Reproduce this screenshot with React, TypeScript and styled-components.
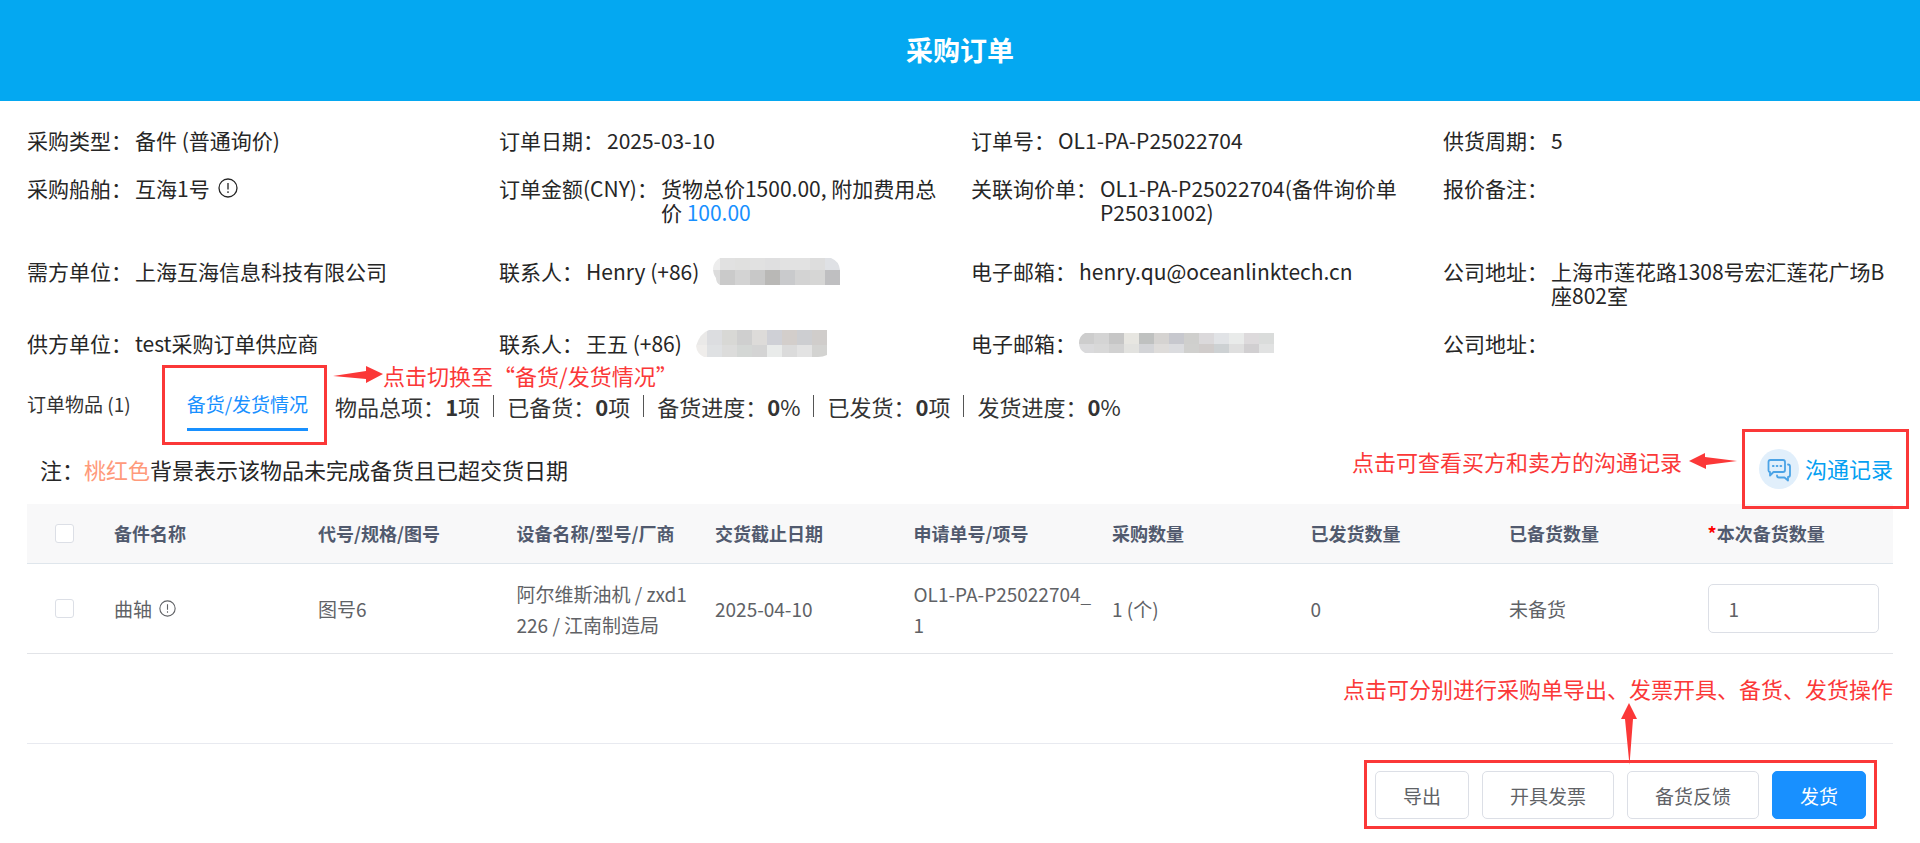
import React from 'react';
import styled, { createGlobalStyle } from 'styled-components';

const red = '#fb3838';

const GlobalStyle = createGlobalStyle`
  *, *::before, *::after { box-sizing: border-box; }
  body {
    margin: 0;
    background: #fff;
    color: #262626;
    font-family: 'Noto Sans CJK SC', 'Noto Sans', sans-serif;
    font-size: 22px;
    line-height: 24px;
  }
  button, input { font-family: inherit; }
`;

const Header = styled.header`
  display: flex;
  align-items: center;
  justify-content: center;
  height: 101px;
  padding-bottom: 2px;
  background: #04a8f1;
`;

const Title = styled.h1`
  margin: 0;
  color: #fff;
  font-size: 27px;
  line-height: 40px;
`;

const Main = styled.main`
  padding: 27px 27px 14px;
`;

const InfoGrid = styled.dl<{ $gap: number }>`
  display: grid;
  grid-template-columns: repeat(4, 1fr);
  row-gap: 24px;
  margin: 0 -22px ${p => p.$gap}px 0;
  font-size: 21px;
`;

const InfoItem = styled.div`
  display: flex;
  align-items: flex-start;
  padding-right: 22px;
`;

const Term = styled.dt`
  flex: none;
  padding-right: 3px;
`;

const Detail = styled.dd`
  display: flex;
  align-items: center;
  gap: 8px;
  min-height: 24px;
  margin: 0;
`;

const Amount = styled.a`
  color: #1890ff;
  text-decoration: none;
`;

const Masked = styled.svg<{ $spaced?: boolean }>`
  display: block;
  flex: none;
  margin: -2px 0 -2px ${p => (p.$spaced ? 6 : 0)}px;
`;

const Tabs = styled.div`
  display: flex;
  align-items: flex-start;
  height: 80px;
`;

const Tab = styled.button<{ $active?: boolean }>`
  height: 51px;
  padding: 0;
  border: 0;
  border-bottom: 3px solid ${p => (p.$active ? '#1890ff' : 'transparent')};
  background: none;
  color: ${p => (p.$active ? '#1890ff' : '#333')};
  font-size: 19px;
  line-height: 24px;
  white-space: nowrap;
`;

const TabSlot = styled.div`
  padding-top: 15px;
`;

const Marked = styled.div`
  border: 3px solid ${red};
`;

const MarkedTab = styled(Marked)`
  height: 80px;
  margin-left: 31px;
  padding: 12px 16px 0 22px;
`;

const TabSide = styled.div`
  margin-top: -2px;
  padding-left: 6px;
`;

const Hint = styled.p`
  display: flex;
  align-items: center;
  margin: 0;
  color: ${red};
  line-height: 24px;
`;

const Stats = styled.ul`
  display: flex;
  margin: 7px 0 0 2px;
  padding: 0;
  list-style: none;
  color: #333;
`;

const Stat = styled.li`
  display: flex;
  align-items: center;

  & + &::before {
    content: '';
    width: 1px;
    height: 22px;
    margin: 0 13px;
    background: #555;
  }
`;

const NoteBar = styled.div`
  display: flex;
  justify-content: space-between;
  height: 59px;
  padding-left: 13px;
`;

const Note = styled.p`
  margin: 0;
  padding-top: 12px;
`;

const Peach = styled.span`
  color: #ff9a7b;
`;

const Contact = styled.div`
  position: relative;
  display: flex;
  align-items: flex-start;
  gap: 5px;
  margin: -16px -16px 0 0;
`;

const ContactHint = styled(Hint)`
  gap: 7px;
  margin-top: 20px;
`;

const MarkedLink = styled(Marked)`
  height: 80px;
  padding: 17px 13px 0 14px;
`;

const RecordLink = styled.a`
  display: flex;
  align-items: center;
  gap: 5px;
  color: #04a0f2;
  text-decoration: none;
`;

const RecordLabel = styled.span`
  padding-bottom: 4px;
`;

const Table = styled.table`
  width: 100%;
  border-collapse: separate;
  border-spacing: 0;
  table-layout: fixed;
  color: #606266;
  font-size: 19px;
  line-height: 31px;
`;

const Col = styled.col<{ $w?: number }>`
  ${p => (p.$w ? `width: ${p.$w}px;` : '')}
`;

const Th = styled.th`
  height: 60px;
  padding: 0 6px 0 13px;
  border-bottom: 1px solid #dfe6ec;
  background: #f8f8f9;
  color: #515a6e;
  font-size: 18px;
  text-align: left;
  white-space: nowrap;
`;

const Td = styled.td`
  height: 90px;
  padding: 0 6px 0 13px;
  border-bottom: 1px solid #e2e4e8;
  word-break: break-all;
`;

const CellLine = styled.span`
  display: flex;
  align-items: center;
  gap: 7px;
`;

const Star = styled.span`
  color: #f00;
`;

const Check = styled.input`
  display: block;
  appearance: none;
  width: 19px;
  height: 19px;
  margin: 0 0 0 15px;
  border: 1px solid #dcdfe6;
  border-radius: 3px;
  background: #fff;
`;

const Quantity = styled.input`
  display: block;
  width: calc(100% - 8px);
  height: 49px;
  padding: 0 20px;
  border: 1px solid #dcdfe6;
  border-radius: 5px;
  color: #606266;
  font-size: 19px;
`;

const HintRow = styled.div`
  display: flex;
  align-items: flex-start;
  justify-content: flex-end;
  height: 90px;
  padding-top: 22px;
  border-bottom: 1px solid #e8eaf0;
`;

const Footer = styled.footer`
  display: flex;
  justify-content: flex-end;
  padding: 16px 16px 0 0;
`;

const Actions = styled(Marked)`
  position: relative;
  display: flex;
  gap: 13px;
  padding: 8px 8px 7px;
`;

const UpArrow = styled.svg`
  position: absolute;
  left: 50%;
  bottom: 100%;
  margin: 0 0 -2px 1px;
`;

const Button = styled.button<{ $primary?: boolean }>`
  height: 48px;
  padding: 0 27px;
  border: 1px solid ${p => (p.$primary ? '#1890ff' : '#dcdfe6')};
  border-radius: 5px;
  background: ${p => (p.$primary ? '#1890ff' : '#fff')};
  color: ${p => (p.$primary ? '#fff' : '#606266')};
  font-size: 19px;
`;

const InfoIcon = ({ size }: { size: number }) => (
  <svg width={size} height={size} viewBox="0 0 20 20" fill="none" stroke="currentColor" strokeWidth="1.3">
    <circle cx="10" cy="10" r="9" />
    <path d="M10 5v6.5M10 13.3v1.7" />
  </svg>
);

type MosaicProps = {
  id: string;
  rows: string[][];
  first: number;
  heights: [number, number];
  outline: string;
  spaced?: boolean;
};

const CELL = 15;

const Mosaic = ({ id, rows, first, heights, outline, spaced }: MosaicProps) => {
  const width = first + (rows[0].length - 1) * CELL;
  const height = heights[0] + heights[1];
  return (
    <Masked $spaced={spaced} width={width} height={height} viewBox={`0 0 ${width} ${height}`} shapeRendering="crispEdges" role="img" aria-label="***">
      <clipPath id={id}>
        <path d={outline} />
      </clipPath>
      <g clipPath={`url(#${id})`}>
        {rows.map((row, y) =>
          row.map((color, x) => (
            <rect
              key={`${x}-${y}`}
              x={x === 0 ? 0 : first + (x - 1) * CELL}
              y={y * heights[0]}
              width={x === 0 ? first : CELL}
              height={heights[y]}
              fill={color}
            />
          ))
        )}
      </g>
    </Masked>
  );
};

const buyerPhone = [
  ['#ededed', '#e1e1e1', '#e0e0df', '#e1e1e1', '#dfdfe0', '#e2e2e2', '#e2e2e2', '#dddddd', '#dfe1e5'],
  ['#dcdcdc', '#cacaca', '#d3d3d3', '#c8c8c8', '#b9b8b6', '#c9cacc', '#d3d3d3', '#d6d6d5', '#bfbfc1'],
];
const sellerPhone = [
  ['#eae9e8', '#dcdde0', '#d8d8d5', '#cfcfcf', '#dddbd9', '#cfd0d6', '#d3cecb', '#cdced1', '#d0cdcb'],
  ['#efedeb', '#dfe1e3', '#dcdcdb', '#d4d7d5', '#d4d4d4', '#e9ebea', '#dbdbdb', '#e3e3e3', '#d3d3d1'],
];
const sellerMail = [
  ['#cdcdcd', '#d4d4d4', '#c6c6c6', '#e7e6e1', '#bfc1c0', '#d5d3d1', '#c7c8ce', '#cfcfcd', '#dbd9db', '#e1e3e6', '#e9ebea', '#dddadc', '#dadcdb'],
  ['#dadadc', '#d8d8d8', '#d1d1d1', '#e2e2df', '#d3d4d7', '#dedcda', '#dbdcdf', '#d0d0ce', '#d0cccb', '#cdd1d3', '#dfdfdf', '#d1cfd1', '#e1e2e2'],
];

const Item = ({ label, children }: { label: string; children?: React.ReactNode }) => (
  <InfoItem>
    <Term>{label}：</Term>
    <Detail>{children}</Detail>
  </InfoItem>
);

export default function App() {
  return (
    <>
      <GlobalStyle />
      <Header>
        <Title>采购订单</Title>
      </Header>
      <Main>
        <InfoGrid $gap={35}>
          <Item label="采购类型">备件 (普通询价)</Item>
          <Item label="订单日期">2025-03-10</Item>
          <Item label="订单号">OL1-PA-P25022704</Item>
          <Item label="供货周期">5</Item>
          <Item label="采购船舶">互海1号<InfoIcon size={20} /></Item>
          <Item label="订单金额(CNY)">
            <span>货物总价1500.00, 附加费用总价 <Amount href="#fees">100.00</Amount></span>
          </Item>
          <Item label="关联询价单">OL1-PA-P25022704(备件询价单P25031002)</Item>
          <Item label="报价备注" />
        </InfoGrid>
        <InfoGrid $gap={24}>
          <Item label="需方单位">上海互海信息科技有限公司</Item>
          <Item label="联系人">
            Henry (+86)
            <Mosaic
              id="buyer-phone"
              rows={buyerPhone}
              first={7}
              heights={[12, 15]}
              outline="M7 0H118Q126 3 127 12V27H7Q3 25 3 20Q0 16 0 10Q1 3 7 0Z"
              spaced
            />
          </Item>
          <Item label="电子邮箱">henry.qu@oceanlinktech.cn</Item>
          <Item label="公司地址">上海市莲花路1308号宏汇莲花广场B座802室</Item>
        </InfoGrid>
        <InfoGrid $gap={10}>
          <Item label="供方单位">test采购订单供应商</Item>
          <Item label="联系人">
            王五 (+86)
            <Mosaic
              id="seller-phone"
              rows={sellerPhone}
              first={11}
              heights={[15, 12]}
              outline="M13 0H131V25Q127 27 122 27H8Q1 24 0 16Q4 3 13 0Z"
              spaced
            />
          </Item>
          <Item label="电子邮箱">
            <Mosaic
              id="seller-mail"
              rows={sellerMail}
              first={15}
              heights={[11, 9]}
              outline="M6 0H195V20H6Q0 17 0 10Q0 3 6 0Z"
            />
          </Item>
          <Item label="公司地址" />
        </InfoGrid>

        <Tabs>
          <TabSlot>
            <Tab>订单物品 (1)</Tab>
          </TabSlot>
          <MarkedTab>
            <Tab $active>备货/发货情况</Tab>
          </MarkedTab>
          <TabSide>
            <Hint>
              <svg width="50" height="18" viewBox="0 0 50 18" fill={red}>
                <path d="M0 10L33 5V0L50 8L33 17V13Z" />
              </svg>
              点击切换至“备货/发货情况”
            </Hint>
            <Stats>
              <Stat>物品总项：<b>1</b>项</Stat>
              <Stat>已备货：<b>0</b>项</Stat>
              <Stat>备货进度：<b>0</b>%</Stat>
              <Stat>已发货：<b>0</b>项</Stat>
              <Stat>发货进度：<b>0</b>%</Stat>
            </Stats>
          </TabSide>
        </Tabs>

        <NoteBar>
          <Note>注：<Peach>桃红色</Peach>背景表示该物品未完成备货且已超交货日期</Note>
          <Contact>
            <ContactHint>
              点击可查看买方和卖方的沟通记录
              <svg width="48" height="18" viewBox="0 0 48 18" fill={red}>
                <path d="M48 9L16 5V1L0 9L17 17V13Z" />
              </svg>
            </ContactHint>
            <MarkedLink>
              <RecordLink href="#records">
                <svg width="41" height="41" viewBox="0 0 41 41" fill="none">
                  <circle cx="20" cy="20" r="20" fill="#e1effb" />
                  <g stroke="#4ba3e6" strokeWidth="1.8" strokeLinejoin="round" strokeLinecap="round">
                    <path d="M11.500 11H24a2 2 0 0 1 2 2v8a2 2 0 0 1-2 2H14.500L11 26.500V23a1.500 1.500 0 0 1-1.500-1.500V13a2 2 0 0 1 2-2Z" />
                    <path d="M29 15.500a2 2 0 0 1 2 2V26a2 2 0 0 1-2 2V31.500L25.500 28.500H20a2 2 0 0 1-2-2" />
                    <path d="M14 17h.5M17.800 17h.5M21.600 17h.5" strokeWidth="2.200" />
                  </g>
                </svg>
                <RecordLabel>沟通记录</RecordLabel>
              </RecordLink>
            </MarkedLink>
          </Contact>
        </NoteBar>

        <Table>
          <colgroup>
            <Col $w={74} />
            <Col $w={204} />
            <Col /><Col /><Col /><Col /><Col /><Col /><Col /><Col />
          </colgroup>
          <thead>
            <tr>
              <Th><Check type="checkbox" aria-label="全选" /></Th>
              <Th>备件名称</Th>
              <Th>代号/规格/图号</Th>
              <Th>设备名称/型号/厂商</Th>
              <Th>交货截止日期</Th>
              <Th>申请单号/项号</Th>
              <Th>采购数量</Th>
              <Th>已发货数量</Th>
              <Th>已备货数量</Th>
              <Th><Star>*</Star>本次备货数量</Th>
            </tr>
          </thead>
          <tbody>
            <tr>
              <Td><Check type="checkbox" aria-label="选择曲轴" /></Td>
              <Td><CellLine>曲轴<InfoIcon size={17} /></CellLine></Td>
              <Td>图号6</Td>
              <Td>阿尔维斯油机 / zxd1226 / 江南制造局</Td>
              <Td>2025-04-10</Td>
              <Td>OL1-PA-P25022704_1</Td>
              <Td>1 (个)</Td>
              <Td>0</Td>
              <Td>未备货</Td>
              <Td><Quantity aria-label="本次备货数量" defaultValue="1" /></Td>
            </tr>
          </tbody>
        </Table>

        <HintRow>
          <Hint>点击可分别进行采购单导出、发票开具、备货、发货操作</Hint>
        </HintRow>

        <Footer>
          <Actions>
            <UpArrow width="16" height="62" viewBox="0 0 16 62" fill={red}>
              <path d="M8 0L16 16H12L8.500 62L4 16H0Z" />
            </UpArrow>
            <Button>导出</Button>
            <Button>开具发票</Button>
            <Button>备货反馈</Button>
            <Button $primary>发货</Button>
          </Actions>
        </Footer>
      </Main>
    </>
  );
}
